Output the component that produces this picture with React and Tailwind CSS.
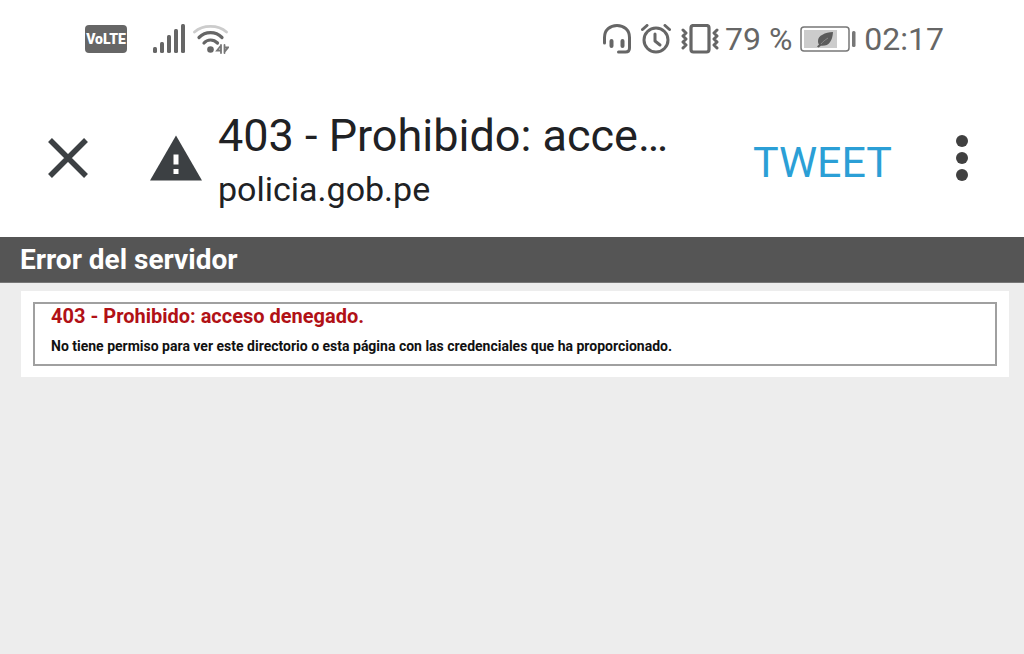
import clsx from 'clsx';

const SignalIcon = () => (
  <svg width="32" height="30" viewBox="0 0 32 30" fill="#666" aria-hidden="true">
    <rect x="0" y="23" width="4" height="6" rx="1.5" />
    <rect x="7" y="18" width="4" height="11" rx="1.5" />
    <rect x="14" y="11" width="4" height="18" rx="1.5" />
    <rect x="21" y="5" width="4" height="24" rx="1.5" />
    <rect x="28" y="0" width="4" height="29" rx="1.5" />
  </svg>
);

const WifiIcon = () => (
  <svg width="36" height="30" viewBox="0 0 36 30" fill="none" strokeLinecap="round" aria-hidden="true">
    <path d="M1.5 8C10 .5 25 .5 33.5 8" stroke="#ccc" strokeWidth="2.8" />
    <path d="M6 13.500C12.500 7 22.500 7 29 13.500" stroke="#666" strokeWidth="3.200" />
    <path d="M11 19C14.500 15 20.500 15 24.500 19" stroke="#666" strokeWidth="3.200" />
    <circle cx="17.500" cy="25.500" r="3.300" fill="#666" />
    <path d="M28 21V29M28 21.500L24 26.500H28M31.500 21V29M31.500 28L35 23.500H31.500" stroke="#777" strokeWidth="1.800" />
  </svg>
);

const HeadsetIcon = () => (
  <svg width="28" height="30" viewBox="0 0 28 30" fill="none" stroke="#666" strokeWidth="3" strokeLinecap="round" aria-hidden="true">
    <path d="M1.5 19V13.5C1.5 6 7 1.5 14 1.5S26.5 6 26.5 13.5V24C26.5 27 25 28 22.5 28H15.500" />
    <path d="M8.500 17V22M19.500 17V22" strokeWidth="4" />
  </svg>
);

const AlarmIcon = () => (
  <svg width="30" height="30" viewBox="0 0 30 30" fill="none" stroke="#666" strokeWidth="3" strokeLinecap="round" strokeLinejoin="round" aria-hidden="true">
    <circle cx="15" cy="16" r="12" />
    <path d="M14 10V17L19 21" />
    <path d="M1.5 5.5L6 1.5M24 1.5L28.5 5.5" />
  </svg>
);

const VibrateIcon = () => (
  <svg width="38" height="30" viewBox="0 0 38 30" fill="none" stroke="#666" strokeWidth="3" strokeLinecap="round" strokeLinejoin="round" aria-hidden="true">
    <rect x="10" y="1.5" width="18" height="26.5" rx="2.5" strokeWidth="3.2" />
    <path d="M2 6L5 9L2 12L5 15L2 18L5 21L2 24M36 6L33 9L36 12L33 15L36 18L33 21L36 24" />
  </svg>
);

const BatteryIcon = () => (
  <svg width="56" height="28" viewBox="0 0 56 28" fill="none" aria-hidden="true">
    <rect x="1" y="2" width="48" height="24" rx="3" stroke="#777" strokeWidth="1.5" />
    <rect x="4" y="5" width="33" height="18" fill="#ccc" />
    <path d="M33 7C25 7.500 18 10.500 18 16C18 17.500 18.300 18.500 19 19.500L17 21.500L18.500 22.500L21 20.800C29 21.500 32.500 16 33 7Z" fill="#5c5c5c" />
    <path d="M21 19C23 16.500 25 15 28 13" stroke="#888" strokeWidth="1" />
    <rect x="52" y="6" width="3.5" height="16" rx="1.5" fill="#777" />
  </svg>
);

const CloseIcon = () => (
  <svg width="40" height="40" viewBox="0 0 40 40" stroke="#3c4043" strokeWidth="5.5" aria-hidden="true">
    <path d="M2 2L38 38M38 2L2 38" />
  </svg>
);

const WarningIcon = () => (
  <svg width="52" height="46" viewBox="0 0 52 46" role="img" aria-label="No seguro" className="shrink-0">
    <path d="M26 .5L52 45.5H0Z" fill="#3c4043" />
    <path d="M23.5 19.5H28.5V29.5H23.5ZM23.5 34H28.5V39H23.5Z" fill="#fff" />
  </svg>
);

const MenuIcon = () => (
  <svg width="12" height="48" viewBox="0 0 12 48" fill="#404040" aria-hidden="true">
    <circle cx="6" cy="7" r="6" />
    <circle cx="6" cy="24" r="6" />
    <circle cx="6" cy="41" r="6" />
  </svg>
);

const StatusBar = () => {
  const text = 'text-[32px] leading-10';

  return (
    <div className="flex items-center justify-between h-[78px] pl-[85px] pr-20 text-[#666]">
      <div className="flex items-center">
        <span className="flex items-center justify-center w-[42px] h-7 mr-[26px] rounded-sm bg-[#666] text-white text-sm leading-none font-black">
          VoLTE
        </span>
        <SignalIcon />
        <span className="w-2" />
        <WifiIcon />
      </div>
      <div className="flex items-center">
        <div className="flex items-center gap-2.5 mr-1.5">
          <HeadsetIcon />
          <AlarmIcon />
          <VibrateIcon />
        </div>
        <span className={clsx(text, 'mr-2')}>79 %</span>
        <BatteryIcon />
        <span className={clsx(text, 'ml-2')}>02:17</span>
      </div>
    </div>
  );
};

const Toolbar = () => (
  <header className="flex items-center h-[159px] pl-12 pr-14 text-[#202124]">
    <button type="button" aria-label="Cerrar" className="shrink-0 mr-[62px]">
      <CloseIcon />
    </button>
    <WarningIcon />
    <div className="flex-1 min-w-0 pt-2 ml-4">
      <p className="text-[45px] leading-[54px] truncate">403 - Prohibido: acce…</p>
      <p className="text-[34px] leading-[52px] truncate">policia.gob.pe</p>
    </div>
    <button type="button" className="shrink-0 ml-4 mr-16 pt-2 text-[43px] leading-[50px] text-[#2b9fd6]">
      TWEET
    </button>
    <button type="button" aria-label="Más opciones" className="shrink-0">
      <MenuIcon />
    </button>
  </header>
);

const ErrorPage = () => (
  <main className="flex-1 bg-[#ededed]">
    <div className="px-5 pt-[5px] pb-1 bg-[#555] border-b border-[#777]">
      <h1 className="text-[28px] leading-9 font-bold text-white">Error del servidor</h1>
    </div>
    <div className="mt-2 ml-[21px] mr-[15px] px-3 py-[11px] bg-white">
      <div className="h-16 px-4 border-2 border-[#a0a0a0]">
        <h2 className="text-xl leading-6 font-bold text-[#b11116]">403 - Prohibido: acceso denegado.</h2>
        <h3 className="mt-2 text-sm leading-5 font-bold text-[#111]">
          No tiene permiso para ver este directorio o esta página con las credenciales que ha proporcionado.
        </h3>
      </div>
    </div>
  </main>
);

export default function App() {
  return (
    <div className="flex flex-col min-h-screen bg-white font-[Roboto,sans-serif]">
      <StatusBar />
      <Toolbar />
      <ErrorPage />
    </div>
  );
}
